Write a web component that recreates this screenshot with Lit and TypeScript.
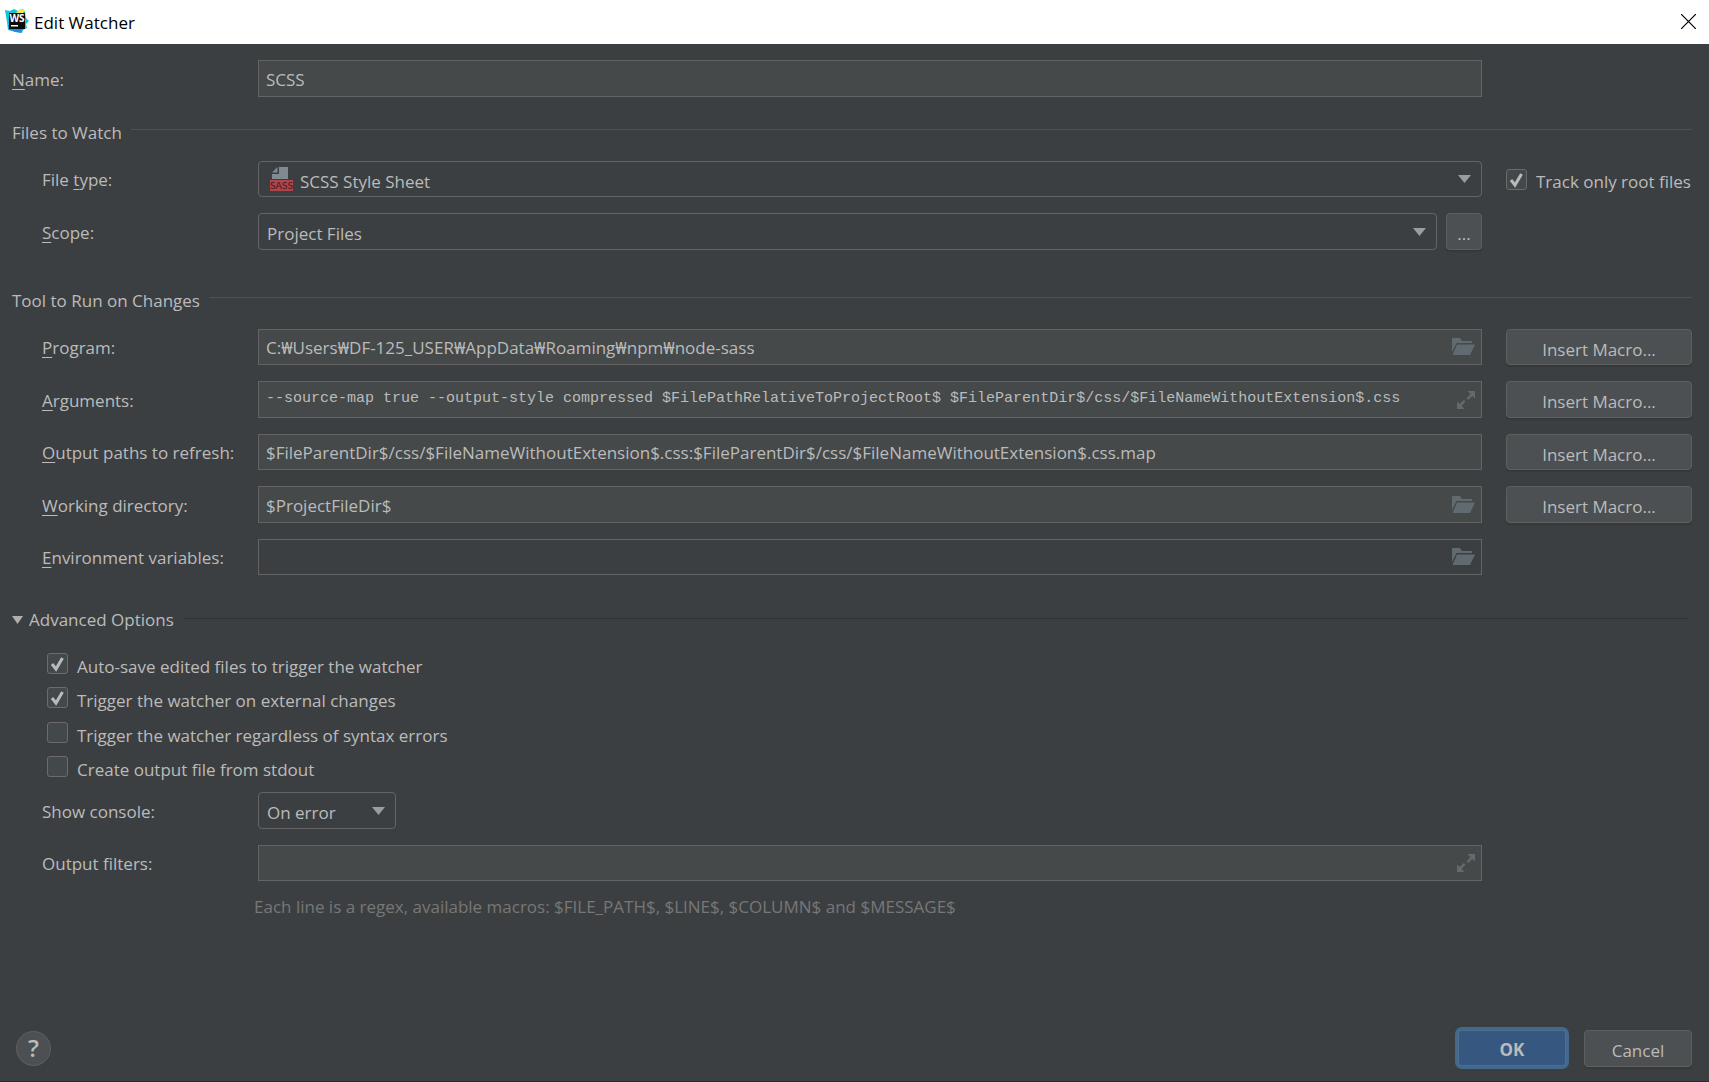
import { LitElement, html, css, svg, nothing } from "lit";
import { customElement, state } from "lit/decorators.js";

const folderIcon = html`<svg class="glyph" viewBox="0 0 23 18" width="23" height="18" aria-hidden="true">
  <path d="M0 0h8l2 3h10v2H4.500L0 14z" />
  <path d="M5 6.500h18L18 17H0.500z" />
</svg>`;

const expandIcon = html`<svg class="glyph" viewBox="0 0 18 18" width="18" height="18" aria-hidden="true">
  <path d="M10.500 0H18v7.500l-2.600-2.600-4.200 4.200-1.700-1.700 3.900-4.200z" />
  <path d="M0 10.500l2.600 2.600 4.200-4.200 1.700 1.700-3.900 4.200L7.500 18H0z" />
</svg>`;

const arrowIcon = html`<svg class="arrow" viewBox="0 0 13 8" width="13" height="8" aria-hidden="true">
  <path d="M0 0h13L6.500 8z" />
</svg>`;

const sassIcon = html`<svg class="sass" viewBox="0 0 23 24" width="23" height="24" aria-hidden="true">
  <path d="M9 0h9v12H2V7h7z" fill="#7f8b91" />
  <path d="M7.500 0v5.500H2z" fill="#7f8b91" />
  <rect y="13" width="23" height="11" fill="#b2434a" />
  <text x="11.500" y="22" text-anchor="middle" font-family="Lato, sans-serif" font-size="10" font-weight="400" fill="#3d1d1f">SASS</text>
</svg>`;

const appIcon = html`<svg viewBox="0 0 24 24" width="24" height="24" aria-hidden="true">
  <path d="M0 1l5 1 4-2 4 2 5-2 2 3 1 6 3 3-3 3 1 4-4 2-1 3-7-2-7-1-1-8z" fill="#12c5da" />
  <path d="M3 16h16l-3 8-6-1-6-2z" fill="#1d8fe0" />
  <path d="M11 4l4-4 5 1-3 4z" fill="#f1ee4e" />
  <rect x="4" y="4" width="16" height="16" fill="#0b0b0b" />
  <text x="12" y="13" text-anchor="middle" font-family="Open Sans, sans-serif" font-size="10" font-weight="700" fill="#fff">WS</text>
  <rect x="6" y="16" width="7" height="1.500" fill="#fff" />
</svg>`;

const checkMark = svg`<path d="M5 11l4 5 6.500-11" fill="none" stroke="#b8babb" stroke-width="3" />`;

interface Option {
  id: string;
  text: string;
  on: boolean;
}

@customElement("app-root")
export class AppRoot extends LitElement {
  static styles = css`
    :host {
      display: flex;
      flex-direction: column;
      min-height: 100vh;
      box-sizing: border-box;
      border-bottom: 1px solid #2b2b2b;
      background: #3c3f41;
      color: #bbbbbb;
      font-family: "Open Sans", "Noto Sans", "Noto Sans CJK KR", sans-serif;
      font-size: 17px;
      line-height: 24px;
    }
    * {
      box-sizing: border-box;
    }
    button,
    input,
    select {
      font: inherit;
      color: inherit;
      margin: 0;
      outline: none;
    }
    .titlebar {
      display: flex;
      align-items: center;
      gap: 5px;
      height: 44px;
      padding: 0 13px 2px 5px;
      background: #ffffff;
      color: #000000;
    }
    .titlebar h1 {
      flex: 1;
      margin: 0;
      padding-top: 4px;
      font-size: 17px;
      font-weight: 400;
    }
    .close {
      display: flex;
      padding: 0;
      border: 0;
      background: none;
    }
    form {
      display: flex;
      flex: 1;
      flex-direction: column;
      padding: 16px 17px 12px 12px;
    }
    .rows {
      display: grid;
      grid-template-columns: 216px minmax(0, 1fr) 210px;
      grid-auto-rows: 36px 37px;
      row-gap: 16px;
      padding-left: 30px;
    }
    .rows.top {
      grid-template-columns: 246px minmax(0, 1fr) 210px;
      grid-auto-rows: 37px;
      padding-left: 0;
    }
    .rows.late {
      grid-auto-rows: 37px 36px;
      margin-top: 1px;
    }
    .name {
      align-self: center;
      padding-top: 2px;
      white-space: nowrap;
    }
    u {
      text-decoration-thickness: 1px;
      text-underline-offset: 3px;
      text-decoration-skip-ink: none;
    }
    .field {
      grid-column: 2;
      display: flex;
      gap: 9px;
      min-width: 0;
    }
    .box {
      display: flex;
      flex: 1;
      align-items: center;
      min-width: 0;
      padding-right: 6px;
      border: 1px solid #646464;
      background: #45494a;
    }
    .box.off {
      background: #3c3f41;
    }
    .box input {
      flex: 1;
      min-width: 0;
      height: 100%;
      padding: 1px 0 0 7px;
      border: 0;
      background: none;
    }
    .box .mono {
      padding: 0 0 2px 7px;
      font-family: "Liberation Mono", monospace;
      font-size: 15px;
    }
    .icon-button {
      display: flex;
      padding: 0;
      border: 0;
      background: none;
    }
    .glyph {
      fill: #616a6e;
    }
    .combo {
      display: grid;
      flex: 1;
      align-items: center;
      min-width: 0;
    }
    .combo.small {
      flex: 0 0 138px;
    }
    .combo > * {
      grid-area: 1 / 1;
    }
    .combo select {
      width: 100%;
      height: 100%;
      padding: 5px 30px 0 8px;
      border: 1px solid #646464;
      border-radius: 4px;
      background: #3c3f41;
      appearance: none;
    }
    .combo.pic select {
      padding-left: 41px;
    }
    .arrow {
      justify-self: end;
      margin-right: 11px;
      fill: #9a9da0;
      pointer-events: none;
    }
    .sass {
      margin-left: 12px;
      pointer-events: none;
    }
    .push {
      padding: 5px 0 0;
      border: 1px solid #5e6060;
      border-radius: 4px;
      background: #4c5052;
      box-shadow: 0 2px 1px #36393a;
    }
    .macro {
      margin-left: 24px;
    }
    .more {
      flex: 0 0 36px;
    }
    .section {
      display: flex;
      align-items: center;
      gap: 9px;
      margin: 0;
      font-size: 17px;
      font-weight: 400;
    }
    .section::after {
      content: "";
      flex: 1;
      height: 1px;
      margin-bottom: 8px;
      background: #515151;
    }
    .files {
      padding: 24px 0 16px;
    }
    .tool {
      padding: 39px 0 16px;
    }
    .advanced {
      padding: 33px 4px 21px 0;
    }
    .advanced::after {
      margin-bottom: 3px;
      background: #323232;
    }
    .toggle {
      display: flex;
      align-items: center;
      gap: 6px;
      padding: 0;
      border: 0;
      background: none;
    }
    .toggle svg {
      fill: #adafb0;
    }
    .checks {
      display: grid;
      grid-auto-rows: 34px 35px;
      padding-left: 35px;
    }
    .check {
      display: flex;
      align-items: flex-start;
      gap: 9px;
      white-space: nowrap;
    }
    .check.side {
      margin-left: 24px;
      padding-top: 8px;
    }
    .check label {
      padding-top: 2px;
    }
    .check.side label {
      padding-top: 1px;
    }
    .tick {
      display: grid;
      flex: none;
      width: 21px;
      height: 21px;
    }
    .tick > * {
      grid-area: 1 / 1;
      width: 21px;
      height: 21px;
    }
    .tick input {
      border: 1px solid #6b6b6b;
      border-radius: 3px;
      background: #43494a;
      appearance: none;
    }
    .tick svg {
      pointer-events: none;
    }
    .hint {
      margin: 0;
      padding: 14px 0 0 242px;
      color: #777777;
    }
    .footer {
      display: flex;
      align-items: center;
      gap: 15px;
      margin-top: auto;
    }
    .help {
      width: 35px;
      height: 35px;
      margin: 0 auto 0 4px;
      padding: 0;
      border: 1px solid #5e6060;
      border-radius: 50%;
      background: #4c5052;
      font-size: 24px;
      font-weight: 600;
    }
    .ok {
      width: 114px;
      height: 42px;
      padding: 4px 0 0;
      border: 3px solid #43698e;
      border-radius: 7px;
      background: #365880;
      box-shadow: inset 0 0 0 1px #4c708c;
      font-weight: 700;
    }
    .cancel {
      width: 108px;
      height: 37px;
    }
  `;

  @state() private options: Option[] = [
    { id: "autosave", text: "Auto-save edited files to trigger the watcher", on: true },
    { id: "external", text: "Trigger the watcher on external changes", on: true },
    { id: "syntax", text: "Trigger the watcher regardless of syntax errors", on: false },
    { id: "stdout", text: "Create output file from stdout", on: false },
  ];

  @state() private trackRoot = true;

  private tick(id: string, on: boolean, flip: () => void) {
    return html`<span class="tick">
      <input type="checkbox" id=${id} .checked=${on} @change=${flip} />
      <svg viewBox="0 0 21 21" aria-hidden="true">${on ? checkMark : nothing}</svg>
    </span>`;
  }

  private flip(id: string) {
    this.options = this.options.map((o) => (o.id === id ? { ...o, on: !o.on } : o));
  }

  private textRow(
    id: string,
    key: string,
    rest: string,
    value: string,
    icon: unknown = nothing,
    macro = true,
    cls = "",
  ) {
    return html`
      <label class="name" for=${id}><u>${key}</u>${rest}</label>
      <div class="field">
        <div class="box ${cls === "off" ? "off" : ""}">
          <input id=${id} type="text" class=${cls} .value=${value} />
          ${icon === nothing
            ? nothing
            : html`<button type="button" class="icon-button" aria-label="Browse">${icon}</button>`}
        </div>
      </div>
      ${macro ? html`<button type="button" class="push macro">Insert Macro...</button>` : html`<span></span>`}
    `;
  }

  render() {
    return html`
      <header class="titlebar">
        ${appIcon}
        <h1>Edit Watcher</h1>
        <button class="close" aria-label="Close">
          <svg viewBox="0 0 15 15" width="15" height="15" aria-hidden="true">
            <path d="M0 0l15 15M15 0L0 15" stroke="#000" stroke-width="1.200" />
          </svg>
        </button>
      </header>
      <form @submit=${(e: Event) => e.preventDefault()}>
        <div class="rows top">${this.textRow("name", "N", "ame:", "SCSS", nothing, false)}</div>

        <h2 class="section files">Files to Watch</h2>
        <div class="rows">
          <label class="name" for="type">File <u>t</u>ype:</label>
          <div class="field">
            <div class="combo pic">
              <select id="type"><option>SCSS Style Sheet</option></select>
              ${sassIcon}${arrowIcon}
            </div>
          </div>
          <div class="check side">
            ${this.tick("track", this.trackRoot, () => (this.trackRoot = !this.trackRoot))}
            <label for="track">Track only root files</label>
          </div>
          <label class="name" for="scope"><u>S</u>cope:</label>
          <div class="field">
            <div class="combo">
              <select id="scope"><option>Project Files</option></select>
              ${arrowIcon}
            </div>
            <button type="button" class="push more">...</button>
          </div>
        </div>

        <h2 class="section tool">Tool to Run on Changes</h2>
        <div class="rows">
          ${this.textRow("program", "P", "rogram:", "C:₩Users₩DF-125_USER₩AppData₩Roaming₩npm₩node-sass", folderIcon)}
          ${this.textRow(
            "arguments",
            "A",
            "rguments:",
            "--source-map true --output-style compressed $FilePathRelativeToProjectRoot$ $FileParentDir$/css/$FileNameWithoutExtension$.css",
            expandIcon,
            true,
            "mono",
          )}
          ${this.textRow(
            "output",
            "O",
            "utput paths to refresh:",
            "$FileParentDir$/css/$FileNameWithoutExtension$.css:$FileParentDir$/css/$FileNameWithoutExtension$.css.map",
          )}
          ${this.textRow("workdir", "W", "orking directory:", "$ProjectFileDir$", folderIcon)}
          ${this.textRow("env", "E", "nvironment variables:", "", folderIcon, false, "off")}
        </div>

        <h2 class="section advanced">
          <button type="button" class="toggle" aria-expanded="true">
            <svg viewBox="0 0 11 8" width="11" height="8" aria-hidden="true"><path d="M0 0h11L5.500 8z" /></svg>
            Advanced Options
          </button>
        </h2>
        <div class="checks">
          ${this.options.map(
            (o) => html`<div class="check">
              ${this.tick(o.id, o.on, () => this.flip(o.id))}<label for=${o.id}>${o.text}</label>
            </div>`,
          )}
        </div>
        <div class="rows late">
          <label class="name" for="console">Show console:</label>
          <div class="field">
            <div class="combo small">
              <select id="console"><option>On error</option></select>
              ${arrowIcon}
            </div>
          </div>
          <span></span>
          ${this.textRow("filters", "", "Output filters:", "", expandIcon, false)}
        </div>
        <p class="hint">Each line is a regex, available macros: $FILE_PATH$, $LINE$, $COLUMN$ and $MESSAGE$</p>

        <footer class="footer">
          <button type="button" class="help" aria-label="Help">?</button>
          <button type="submit" class="ok">OK</button>
          <button type="button" class="push cancel">Cancel</button>
        </footer>
      </form>
    `;
  }
}
